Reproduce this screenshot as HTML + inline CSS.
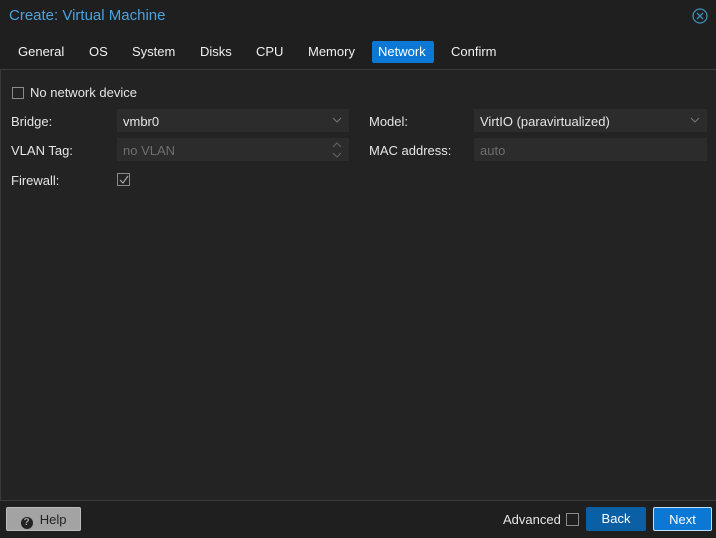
<!DOCTYPE html>
<html><head><style>
*{box-sizing:border-box;margin:0;padding:0}
body{width:716px;height:538px;background:#1f1f1f;font-family:"Liberation Sans",sans-serif;font-size:13px;color:#e6e6e6;position:relative;overflow:hidden}
.a{position:absolute}
.title{left:9px;top:7px;font-size:15px;color:#4ba3dc}
.tab{top:41px;height:22px;line-height:22px;padding:0 6px;font-size:13px;color:#f0f0f0}
.panel{left:0;top:69px;width:716px;height:432px;background:#232323;border-top:1px solid #3c3c3c;border-left:1px solid #3a3a3a;border-bottom:1px solid #3c3c3c}
.lbl{font-size:13px;color:#e6e6e6}
.fld{background:#2c2c2c;height:23px;line-height:25px;padding-left:6px}
.cb{width:12px;height:12px;border:1px solid #8a8a8a}
.btn{height:24px;line-height:23px;text-align:center;border-radius:2px;font-size:13px}
</style></head><body>
<div class="a title">Create: Virtual Machine</div>
<svg class="a" style="left:692px;top:8px" width="16" height="16" viewBox="0 0 16 16"><circle cx="8" cy="8" r="7" fill="none" stroke="#3d8fb8" stroke-width="1.3"/><path d="M5 5L11 11M11 5L5 11" stroke="#3d8fb8" stroke-width="1.3"/></svg>
<div class="a tab" style="left:12px">General</div>
<div class="a tab" style="left:83px">OS</div>
<div class="a tab" style="left:126px">System</div>
<div class="a tab" style="left:194px">Disks</div>
<div class="a tab" style="left:250px">CPU</div>
<div class="a tab" style="left:302px">Memory</div>
<div class="a tab" style="left:372px;width:62px;background:#0a78d4;color:#fff;border-radius:2px">Network</div>
<div class="a tab" style="left:445px">Confirm</div>
<div class="a panel"></div>
<div class="a cb" style="left:12px;top:87px"></div>
<div class="a lbl" style="left:30px;top:85px">No network device</div>
<div class="a lbl" style="left:11px;top:114px">Bridge:</div>
<div class="a fld" style="left:117px;top:109px;width:232px">vmbr0</div>
<svg class="a" style="left:332px;top:117px" width="10" height="7"><path d="M1 1L5 5L9 1" fill="none" stroke="#777" stroke-width="1"/></svg>
<div class="a lbl" style="left:11px;top:143px">VLAN Tag:</div>
<div class="a fld" style="left:117px;top:138px;width:232px;color:#6e6e6e">no VLAN</div>
<svg class="a" style="left:332px;top:142px" width="10" height="16"><path d="M1 5L5 1L9 5M1 11L5 15L9 11" fill="none" stroke="#666" stroke-width="1"/></svg>
<div class="a lbl" style="left:11px;top:173px">Firewall:</div>
<div class="a cb" style="left:117px;top:173px;width:13px;height:13px"></div>
<svg class="a" style="left:118px;top:174px" width="12" height="12"><path d="M2 6L5 9L10 2" fill="none" stroke="#aaa" stroke-width="1.2"/></svg>
<div class="a lbl" style="left:369px;top:114px">Model:</div>
<div class="a fld" style="left:474px;top:109px;width:233px">VirtIO (paravirtualized)</div>
<svg class="a" style="left:690px;top:117px" width="10" height="7"><path d="M1 1L5 5L9 1" fill="none" stroke="#777" stroke-width="1"/></svg>
<div class="a lbl" style="left:369px;top:143px">MAC address:</div>
<div class="a fld" style="left:474px;top:138px;width:233px;color:#6e6e6e">auto</div>
<div class="a btn" style="left:6px;top:507px;width:75px;background:#a3a3a3;color:#222;border:1px solid #bbb">
<span style="display:inline-block;width:12px;height:12px;border-radius:6px;background:#222;color:#a3a3a3;font-size:10px;line-height:12px;font-weight:bold;vertical-align:-1px">?</span>&nbsp; Help</div>
<div class="a lbl" style="left:503px;top:512px">Advanced</div>
<div class="a cb" style="left:566px;top:513px;width:13px;height:13px"></div>
<div class="a btn" style="left:586px;top:507px;width:60px;background:#0a5fa5;color:#fff">Back</div>
<div class="a btn" style="left:653px;top:507px;width:59px;background:#0a78d4;color:#fff;border:1px solid #bfe0ff">Next</div>
</body></html>
